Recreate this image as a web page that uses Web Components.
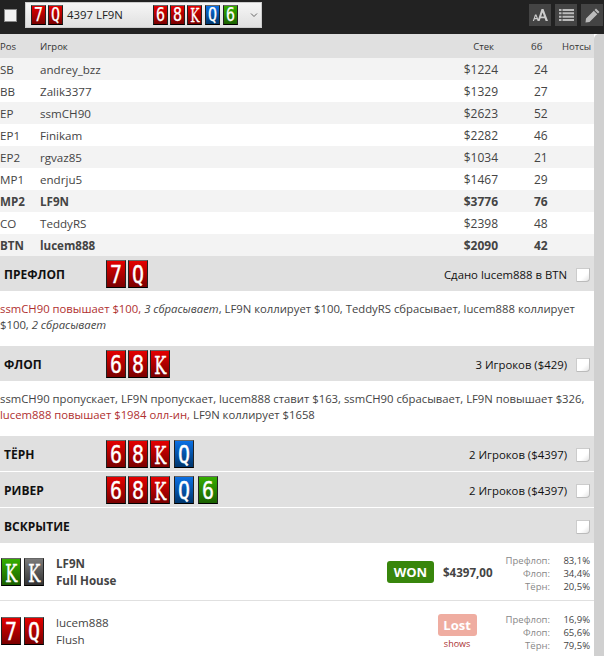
<!DOCTYPE html>
<html>
<head>
<meta charset="utf-8">
<style>
  html, body { margin: 0; padding: 0; height: 656px; overflow: hidden; background: #fff; }
  body { font-family: "Open Sans", "Noto Sans", sans-serif; color: #333; font-size: 12px; }
  hand-view { display: block; }
  .r { color: #b03030; }
</style>
</head>
<body>
<hand-view>
  <top-bar></top-bar>
  <hand-body>
    <seat-table id="seats"></seat-table>
    <street-row name="ПРЕФЛОП" cards="7r Qr" info="Сдано lucem888 в BTN"></street-row>
    <street-log><span class="r">ssmCH90 повышает $100,</span> <i>3 сбрасывает</i>, LF9N коллирует $100, TeddyRS сбрасывает, lucem888 коллирует $100, <i>2 сбрасывает</i></street-log>
    <street-row name="ФЛОП" cards="6r 8r Kr" info="3 Игроков ($429)"></street-row>
    <street-log>ssmCH90 пропускает, LF9N пропускает, lucem888 ставит $163, ssmCH90 сбрасывает, LF9N повышает $326, <span class="r">lucem888 повышает $1984 олл-ин,</span> LF9N коллирует $1658</street-log>
    <street-row name="ТЁРН" cards="6r 8r Kr Qb" info="2 Игроков ($4397)"></street-row>
    <street-row name="РИВЕР" cards="6r 8r Kr Qb 6g" info="2 Игроков ($4397)"></street-row>
    <street-row name="ВСКРЫТИЕ"></street-row>
    <show-row id="p1" name="LF9N" hand="Full House" cards="Kg Kd" bold result="WON" amount="$4397,00" odds="83,1%|34,4%|20,5%"></show-row>
    <show-row id="p2" name="lucem888" hand="Flush" cards="7r Qr" result="Lost" odds="16,9%|65,6%|79,5%"></show-row>
  </hand-body>
</hand-view>

<script>
class PlayingCard extends HTMLElement {
  constructor() {
    super();
    this.shadowDOM = this.attachShadow({ mode: 'open' });
  }

  connectedCallback() {
    const code = this.getAttribute('code') || '';
    const rank = code[0];
    const suit = code[1];
    const faces = {
      r: 'linear-gradient(#e40000, #7a0000)',
      b: 'linear-gradient(#0a70e4, #00366c)',
      g: 'linear-gradient(#36ae00, #1a6000)',
      d: 'linear-gradient(#7a7a7a, #333)',
    };
    const slab = rank === 'K' ? ' class="slab"' : '';
    this.shadowDOM.innerHTML = `
    <style>
    :host { display: block; }
    div {
      width: 18px;
      height: 26px;
      border: 1px solid #222;
      border-top-color: #666;
      border-bottom-color: #000;
      background: ${faces[suit]};
      color: #fff;
      font: 20px/26px "DejaVu Sans Mono", monospace;
      -webkit-text-stroke: 0.3px #fff;
      text-align: center;
    }
    span { display: inline-block; transform: scaleY(1.25); }
    .slab { font-family: "DejaVu Serif", serif; font-size: 17px; transform: scale(0.95, 1.45); }
    :host([small]) div { width: 13px; height: 18px; font-size: 15px; line-height: 18px; -webkit-text-stroke-width: 0.2px; }
    :host([small]) .slab { font-size: 13px; }
    </style>
    <div><span${slab}>${rank}</span></div>`;
  }
}

function cardRow(cards, small) {
  return cards.map((c) => `<playing-card code="${c}"${small ? ' small' : ''}></playing-card>`).join('');
}

class TopBar extends HTMLElement {
  constructor() {
    super();
    this.shadowDOM = this.attachShadow({ mode: 'open' });
    this.shadowDOM.innerHTML = `
    <style>
    :host {
      display: flex;
      align-items: center;
      height: 34px;
      background: #222;
      padding: 0 1px 0 4px;
      box-sizing: border-box;
    }
    .check { width: 11px; height: 11px; margin-top: -3px; background: #f2f2f2; border: 1px solid #888; margin-right: 8px; }
    .select {
      width: 237px;
      height: 26px;
      margin-top: -4px;
      box-sizing: border-box;
      background: linear-gradient(#f6f6f6, #e0e0e0);
      border: 1px solid #ccc;
      display: flex;
      align-items: center;
      padding-left: 5px;
      font-size: 11.4px;
      color: #222;
    }
    .cards { display: flex; gap: 2px; }
    .board playing-card:nth-child(n+4) { margin-left: 1px; }
    .hand { margin: 0 0 0 4px; width: 86px; position: relative; top: -1px; }
    .arrow { margin-left: 12px; width: 8px; height: 8px; }
    .tools { margin-left: auto; margin-top: -4px; display: flex; gap: 4px; }
    .tool { width: 22px; height: 22px; background: #444; display: flex; align-items: center; justify-content: center; }
    </style>
    <div class="check"></div>
    <div class="select">
      <div class="cards">${cardRow(['7r', 'Qr'], true)}</div>
      <span class="hand">4397 LF9N</span>
      <div class="cards board">${cardRow(['6r', '8r', 'Kr', 'Qb', '6g'], true)}</div>
      <svg class="arrow" viewBox="0 0 8 8"><path d="M1 2.5 L4 5.5 L7 2.5" fill="none" stroke="#666" stroke-width="1"/></svg>
    </div>
    <div class="tools">
      <div class="tool"><svg width="16" height="14" viewBox="0 0 16 14"><path fill="#ccc" d="M9.5 1 h2 L16 13 h-2.4 l-1-2.8 h-4 L7.6 13 H5.6 Z M9.2 8.6 h2.8 L10.6 4.4 Z M3 6.5 h1.4 L7 13 H5.6 L5 11.3 H2.6 L2 13 H.8 Z M3 10 h1.6 L3.8 7.9 Z"/></svg></div>
      <div class="tool"><svg width="15" height="12" viewBox="0 0 15 12"><path fill="#bbb" d="M0 0h2.5v2H0z M3.5 0H15v2H3.5z M0 3.3h2.5v2H0z M3.5 3.3H15v2H3.5z M0 6.7h2.5v2H0z M3.5 6.7H15v2H3.5z M0 10h2.5v2H0z M3.5 10H15v2H3.5z"/></svg></div>
      <div class="tool"><svg width="15" height="15" viewBox="0 0 15 15"><path fill="#bbb" d="M11 .5 L14.5 4 L13 5.5 L9.5 2 Z M8.8 2.7 L12.3 6.2 L4.5 14 L.5 14.5 L1 10.5 Z"/></svg></div>
    </div>`;
  }
}

class HandBody extends HTMLElement {
  constructor() {
    super();
    this.shadowDOM = this.attachShadow({ mode: 'open' });
    this.shadowDOM.innerHTML = `
    <style>
    :host { display: flex; height: 622px; overflow: hidden; }
    .main { width: 594px; flex: none; }
    .bar { width: 10px; background: #d0d0d0; border-radius: 5px 0 0 0; }
    </style>
    <div class="main"><slot></slot></div>
    <div class="bar"></div>`;
  }
}

class SeatTable extends HTMLElement {
  constructor() {
    super();
    this.shadowDOM = this.attachShadow({ mode: 'open' });
    const seats = [
      ['SB', 'andrey_bzz', '$1224', '24'],
      ['BB', 'Zalik3377', '$1329', '27'],
      ['EP', 'ssmCH90', '$2623', '52'],
      ['EP1', 'Finikam', '$2282', '46'],
      ['EP2', 'rgvaz85', '$1034', '21'],
      ['MP1', 'endrju5', '$1467', '29'],
      ['MP2', 'LF9N', '$3776', '76', true],
      ['CO', 'TeddyRS', '$2398', '48'],
      ['BTN', 'lucem888', '$2090', '42', true],
    ];
    const rows = seats.map(([pos, name, stack, bb, hero]) => `
      <div class="row${hero ? ' bold' : ''}">
        <span class="pos">${pos}</span><span class="name">${name}</span>
        <span class="stack">${stack}</span><span class="bb">${bb}</span><span class="notes"></span>
      </div>`).join('');
    this.shadowDOM.innerHTML = `
    <style>
    :host { display: block; }
    .row {
      display: grid;
      grid-template-columns: 40px 1fr 58px 64px 32px;
      align-items: center;
      height: 22px;
      font-size: 11.6px;
      color: #444;
    }
    .row:nth-of-type(even) { background: #f3f3f3; }
    .row:nth-of-type(odd) { background: #fff; }
    .row.bold { font-weight: 700; }
    .row.head { height: 24px; background: #e0e0e0; font-size: 9.5px; color: #333; }
    .stack { text-align: right; font-size: 12px; }
    .head .stack { font-size: 9.5px; padding-right: 4px; }
    .bb { padding-left: 36px; font-size: 12px; }
    .head .bb { padding-left: 33px; font-size: 9.5px; }
    .notes { white-space: nowrap; }
    </style>
    <div class="row head">
      <span class="pos">Pos</span><span class="name">Игрок</span>
      <span class="stack">Стек</span><span class="bb">бб</span><span class="notes">Нотсы</span>
    </div>
    ${rows}`;
  }
}

class StreetRow extends HTMLElement {
  constructor() {
    super();
    this.shadowDOM = this.attachShadow({ mode: 'open' });
  }

  connectedCallback() {
    const cards = (this.getAttribute('cards') || '').split(' ').filter(Boolean);
    const flop = cards.slice(0, 3);
    const rest = cards.slice(3);
    const extra = rest.map((c) => `<div class="sep">${cardRow([c])}</div>`).join('');
    this.shadowDOM.innerHTML = `
    <style>
    :host {
      display: flex;
      align-items: center;
      height: 35px;
      margin-bottom: 1px;
      background: #e0e0e0;
      color: #111;
      font-size: 11.35px;
    }
    .name { width: 106px; box-sizing: border-box; padding: 2px 0 0 4px; font-size: 12px; font-weight: 700; }
    .cards { display: flex; gap: 2px; }
    .sep { margin-left: 2px; }
    .info { margin-left: auto; margin-right: 9px; padding-top: 2px; }
    .box {
      width: 12px; height: 12px; margin: 2px 4px 0 0;
      background: linear-gradient(135deg, #fff 60%, #e4e4e4);
      border: 1px solid #ccc;
      border-right-color: #bbb;
      border-bottom-color: #bbb;
      border-radius: 0 0 4px 0;
    }
    </style>
    <span class="name">${this.getAttribute('name')}</span>
    <div class="cards">${cardRow(flop)}${extra}</div>
    <span class="info">${this.getAttribute('info') || ''}</span>
    <div class="box"></div>`;
  }
}

class StreetLog extends HTMLElement {
  constructor() {
    super();
    this.shadowDOM = this.attachShadow({ mode: 'open' });
    this.shadowDOM.innerHTML = `
    <style>
    :host { display: block; height: 54px; box-sizing: border-box; padding: 9px 0 0 0; font-size: 11.3px; line-height: 16px; color: #444; }
    </style>
    <slot></slot>`;
  }
}

class ShowRow extends HTMLElement {
  constructor() {
    super();
    this.shadowDOM = this.attachShadow({ mode: 'open' });
  }

  connectedCallback() {
    const won = this.getAttribute('result') === 'WON';
    const amount = this.getAttribute('amount');
    const odds = this.getAttribute('odds').split('|');
    const labels = ['Префлоп:', 'Флоп:', 'Тёрн:'];
    const lines = labels.map((l, i) => `<span class="l">${l}</span><span class="p">${odds[i]}</span>`).join('');
    this.shadowDOM.innerHTML = `
    <style>
    :host {
      display: flex;
      align-items: center;
      height: ${won ? '57px' : '60px'};
      flex: none;
      box-sizing: border-box;
      padding-left: 1px;
      border-bottom: ${won ? '1px solid #e0e0e0' : '0'};
      color: #444;
      font-size: 11.6px;
    }
    .cards { display: flex; gap: 3px; margin-top: -1px; }
    .who { margin-left: 12px; line-height: 16px; ${this.hasAttribute('bold') ? 'font-weight: 700;' : ''} }
    .who div:first-child { margin-bottom: 1px; }
    .res { margin-left: auto; display: flex; align-items: center; gap: 9px; }
    .badge-wrap { display: flex; flex-direction: column; align-items: center; }
    .badge {
      width: ${won ? '47px' : '39px'}; height: 22px; border-radius: 3px;
      background: ${won ? '#38860c' : '#efada1'};
      color: #fff; font-weight: 700; font-size: 13px; line-height: 22px; text-align: center;
    }
    .shows { font-size: 9px; line-height: 11px; color: #a33; margin-top: 2px; }
    .amount { font-weight: 700; font-size: 11.6px; color: #444; }
    .odds {
      margin-left: ${won ? '13px' : '29px'}; margin-right: 4px;
      display: grid; grid-template-columns: auto 40px; justify-items: end;
      font-size: 9.5px; line-height: 13px; padding-top: 2px;
    }
    .l { color: #888; }
    </style>
    <div class="cards">${cardRow(this.getAttribute('cards').split(' '))}</div>
    <div class="who"><div>${this.getAttribute('name')}</div><div>${this.getAttribute('hand')}</div></div>
    <div class="res">
      <div class="badge-wrap"><div class="badge">${this.getAttribute('result')}</div>${won ? '' : '<div class="shows">shows</div>'}</div>
      ${amount ? `<span class="amount">${amount}</span>` : ''}
    </div>
    <div class="odds">${lines}</div>`;
  }
}

customElements.define('playing-card', PlayingCard);
customElements.define('top-bar', TopBar);
customElements.define('hand-body', HandBody);
customElements.define('seat-table', SeatTable);
customElements.define('street-row', StreetRow);
customElements.define('street-log', StreetLog);
customElements.define('show-row', ShowRow);
</script>
</body>
</html>
